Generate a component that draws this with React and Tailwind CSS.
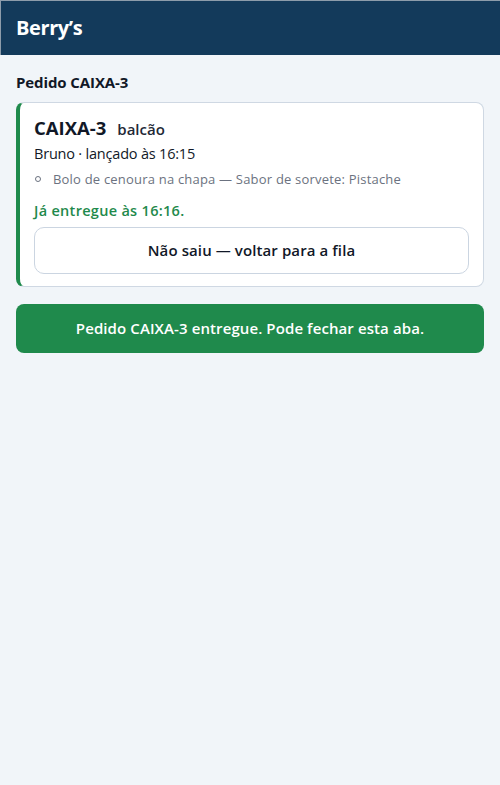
export default function App() {
  return (
    <div
      className="min-h-[785px] bg-[#f1f5f9] text-[#111827]"
      style={{ fontFamily: '"Open Sans", "Noto Sans", sans-serif' }}
    >
      <header className="h-[55px] bg-[#133a5b] border-t border-l border-[#8d9cab] flex items-center px-[15px]">
        <h1 className="text-[20px] font-bold text-white tracking-[-0.4px]">Berry’s</h1>
      </header>

      <main className="px-4 pt-[17px]">
        <h2 className="text-[15px] font-bold leading-[20px] tracking-[-0.1px]">Pedido CAIXA-3</h2>

        <div className="mt-[10px] bg-white rounded-[8px] border border-[#cfd8e3] border-l-4 border-l-[#1f8a4c] px-[14px] pt-[11px] pb-[12px]">
          <div className="flex items-baseline gap-[11px]">
            <span className="text-[18.5px] font-bold">CAIXA-3</span>
            <span className="text-[15px] font-semibold text-[#1f2937]">balcão</span>
          </div>
          <p className="mt-[2px] text-[14.5px] leading-[20px] tracking-[-0.2px]">Bruno · lançado às 16:15</p>
          <ul className="mt-[6px] text-[13px] leading-[18px] text-[#6b7280] tracking-[0.2px]">
            <li className="flex items-center gap-[12px] pl-[1px]">
              <span className="w-[6px] h-[6px] rounded-full border border-[#6b7280]" />
              Bolo de cenoura na chapa — Sabor de sorvete: Pistache
            </li>
          </ul>
          <p className="mt-[13px] text-[14.5px] leading-[20px] font-semibold text-[#1f8a4c] tracking-[0.3px]">Já entregue às 16:16.</p>
          <button className="mt-[6px] w-full h-[47px] rounded-[10px] border border-[#cbd5e1] bg-white text-[15px] font-semibold tracking-[0.1px]">
            Não saiu — voltar para a fila
          </button>
        </div>

        <div className="mt-[17px] h-[49px] rounded-[8px] bg-[#1f8a4c] flex items-center justify-center text-white text-[15px] font-semibold tracking-[0.1px]">
          Pedido CAIXA-3 entregue. Pode fechar esta aba.
        </div>
      </main>
    </div>
  )
}
